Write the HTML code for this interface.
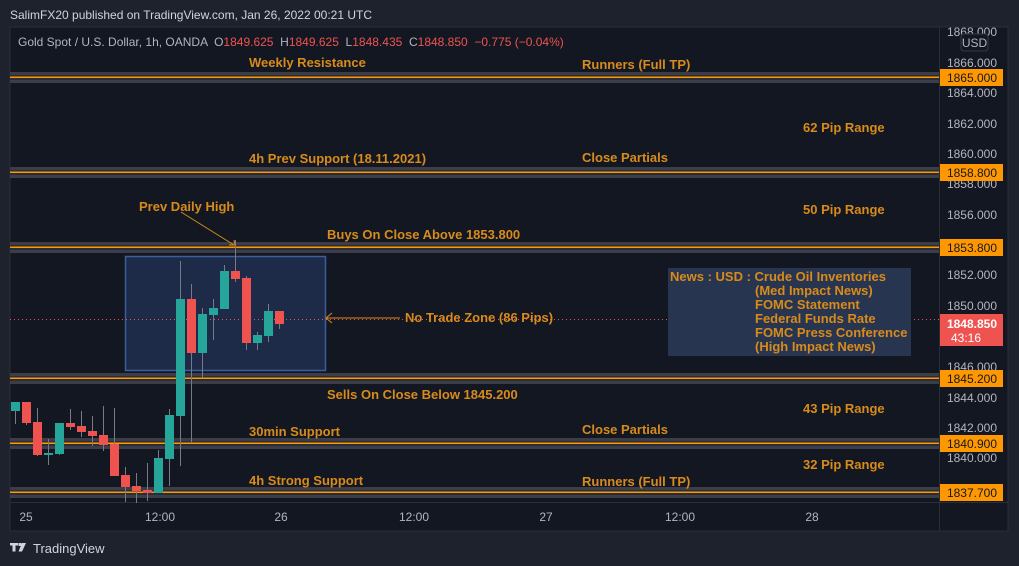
<!DOCTYPE html>
<html><head><meta charset="utf-8"><style>
html,body{margin:0;padding:0;background:#1e222d;width:1019px;height:566px;overflow:hidden}
svg{display:block}
.lb{font-family:"Liberation Sans",sans-serif;font-weight:bold;font-size:13px;fill:#d88b1a}
.ax{font-family:"Liberation Sans",sans-serif;font-size:12px;fill:#b2b5be}
</style></head><body>
<svg width="1019" height="566" viewBox="0 0 1019 566">
<rect x="0" y="0" width="1019" height="566" fill="#1e222d"/>
<text x="10" y="19" font-family="Liberation Sans,sans-serif" font-size="12" fill="#d1d4dc">SalimFX20 published on TradingView.com, Jan 26, 2022 00:21 UTC</text>
<rect x="10" y="27" width="998" height="504" fill="#131722" stroke="#2a2e39"/>
<line x1="939.5" y1="27" x2="939.5" y2="531" stroke="#2a2e39"/>
<line x1="10" y1="502.5" x2="1008" y2="502.5" stroke="#2a2e39"/>
<text x="18" y="46" font-family="Liberation Sans,sans-serif" font-size="12" fill="#b2b5be" xml:space="preserve">Gold Spot / U.S. Dollar, 1h, OANDA  O<tspan fill="#ef5350">1849.625</tspan>  H<tspan fill="#ef5350">1849.625</tspan>  L<tspan fill="#ef5350">1848.435</tspan>  C<tspan fill="#ef5350">1848.850</tspan>  <tspan fill="#ef5350">−0.775 (−0.04%)</tspan></text>
<g>
<rect x="10" y="72" width="929" height="11" fill="#3b3e48"/><rect x="10" y="75" width="929" height="5" fill="#2a2d36"/><rect x="10" y="76.5" width="929" height="1.5" fill="#ff9800"/>
<rect x="10" y="167" width="929" height="11" fill="#3b3e48"/><rect x="10" y="170" width="929" height="5" fill="#2a2d36"/><rect x="10" y="171.5" width="929" height="1.5" fill="#ff9800"/>
<rect x="10" y="242" width="929" height="11" fill="#3b3e48"/><rect x="10" y="245" width="929" height="5" fill="#2a2d36"/><rect x="10" y="246.5" width="929" height="1.5" fill="#ff9800"/>
<rect x="10" y="373" width="929" height="11" fill="#3b3e48"/><rect x="10" y="376" width="929" height="5" fill="#2a2d36"/><rect x="10" y="377.5" width="929" height="1.5" fill="#ff9800"/>
<rect x="10" y="438" width="929" height="11" fill="#3b3e48"/><rect x="10" y="441" width="929" height="5" fill="#2a2d36"/><rect x="10" y="442.5" width="929" height="1.5" fill="#ff9800"/>
<rect x="10" y="487" width="929" height="11" fill="#3b3e48"/><rect x="10" y="490" width="929" height="5" fill="#2a2d36"/><rect x="10" y="491.5" width="929" height="1.5" fill="#ff9800"/>
</g>
<rect x="125.5" y="256.5" width="200" height="114" fill="#1e2b48" stroke="#3b5e9c" stroke-width="1.5"/>
<line x1="10" y1="319.5" x2="939" y2="319.5" stroke="#ef5350" stroke-dasharray="1,3"/>
<rect x="668" y="268" width="243" height="88" fill="#283550"/>
<g stroke="#787b86" stroke-width="1">
<line x1="15.5" y1="402" x2="15.5" y2="424"/><line x1="26.5" y1="402" x2="26.5" y2="425"/><line x1="37.5" y1="408" x2="37.5" y2="456"/><line x1="48.5" y1="439" x2="48.5" y2="465"/><line x1="59.5" y1="423" x2="59.5" y2="455"/><line x1="70.5" y1="409" x2="70.5" y2="430"/><line x1="81.5" y1="411" x2="81.5" y2="437"/><line x1="92.5" y1="416" x2="92.5" y2="446"/><line x1="103.5" y1="406" x2="103.5" y2="451"/><line x1="114.5" y1="408" x2="114.5" y2="476"/><line x1="125.5" y1="467" x2="125.5" y2="502"/><line x1="136.5" y1="473" x2="136.5" y2="503"/><line x1="147.5" y1="463" x2="147.5" y2="501"/><line x1="158.5" y1="450" x2="158.5" y2="493"/><line x1="169.5" y1="409" x2="169.5" y2="486"/><line x1="180.5" y1="261" x2="180.5" y2="466"/><line x1="191.5" y1="284" x2="191.5" y2="442"/><line x1="202.5" y1="308" x2="202.5" y2="378"/><line x1="213.5" y1="299" x2="213.5" y2="340"/><line x1="224.5" y1="265" x2="224.5" y2="309"/><line x1="235.5" y1="240" x2="235.5" y2="282"/><line x1="246.5" y1="276" x2="246.5" y2="350"/><line x1="257.5" y1="332" x2="257.5" y2="350"/><line x1="268.5" y1="304" x2="268.5" y2="342"/><line x1="279.5" y1="311" x2="279.5" y2="329"/>
</g>
<g>
<rect x="11" y="402" width="9" height="9" fill="#26a69a"/><rect x="22" y="402" width="9" height="21" fill="#ef5350"/><rect x="33" y="422" width="9" height="33" fill="#ef5350"/><rect x="44" y="453" width="9" height="2" fill="#26a69a"/><rect x="55" y="423" width="9" height="31" fill="#26a69a"/><rect x="66" y="423" width="9" height="4" fill="#ef5350"/><rect x="77" y="426" width="9" height="6" fill="#ef5350"/><rect x="88" y="431" width="9" height="5" fill="#ef5350"/><rect x="99" y="435" width="9" height="10" fill="#ef5350"/><rect x="110" y="444" width="9" height="32" fill="#ef5350"/><rect x="121" y="475" width="9" height="12" fill="#ef5350"/><rect x="132" y="486" width="9" height="5" fill="#ef5350"/><rect x="143" y="490" width="9" height="3" fill="#ef5350"/><rect x="154" y="458" width="9" height="35" fill="#26a69a"/><rect x="165" y="415" width="9" height="44" fill="#26a69a"/><rect x="176" y="299" width="9" height="117" fill="#26a69a"/><rect x="187" y="299" width="9" height="54" fill="#ef5350"/><rect x="198" y="314" width="9" height="39" fill="#26a69a"/><rect x="209" y="308" width="9" height="7" fill="#26a69a"/><rect x="220" y="271" width="9" height="38" fill="#26a69a"/><rect x="231" y="271" width="9" height="8" fill="#ef5350"/><rect x="242" y="278" width="9" height="65" fill="#ef5350"/><rect x="253" y="335" width="9" height="8" fill="#26a69a"/><rect x="264" y="311" width="9" height="25" fill="#26a69a"/><rect x="275" y="311" width="9" height="13" fill="#ef5350"/>
</g>
<line x1="181" y1="212" x2="234" y2="245" stroke="#d88b1a" stroke-width="1"/>
<path d="M229 245 L235 245 L234 240" fill="none" stroke="#d88b1a"/>
<line x1="327" y1="318" x2="400" y2="318" stroke="#d88b1a"/>
<path d="M332 313 L326 318 L332 323" fill="none" stroke="#d88b1a"/>
<text class="lb" x="249" y="67">Weekly Resistance</text>
<text class="lb" x="582" y="69">Runners (Full TP)</text>
<text class="lb" x="803" y="132">62 Pip Range</text>
<text class="lb" x="249" y="163">4h Prev Support (18.11.2021)</text>
<text class="lb" x="582" y="162">Close Partials</text>
<text class="lb" x="139" y="211">Prev Daily High</text>
<text class="lb" x="803" y="214">50 Pip Range</text>
<text class="lb" x="327" y="239">Buys On Close Above 1853.800</text>
<text class="lb" x="405" y="322">No Trade Zone (86 Pips)</text>
<text class="lb" x="327" y="399">Sells On Close Below 1845.200</text>
<text class="lb" x="803" y="413">43 Pip Range</text>
<text class="lb" x="249" y="436">30min Support</text>
<text class="lb" x="582" y="434">Close Partials</text>
<text class="lb" x="803" y="469">32 Pip Range</text>
<text class="lb" x="249" y="485">4h Strong Support</text>
<text class="lb" x="582" y="486">Runners (Full TP)</text>
<text class="lb" x="670" y="281">News : USD : Crude Oil Inventories</text>
<text class="lb" x="755" y="295">(Med Impact News)</text>
<text class="lb" x="755" y="309">FOMC Statement</text>
<text class="lb" x="755" y="323">Federal Funds Rate</text>
<text class="lb" x="755" y="337">FOMC Press Conference</text>
<text class="lb" x="755" y="351">(High Impact News)</text>
<g class="ax" text-anchor="end">
<text x="997" y="36">1868.000</text><text x="997" y="67">1866.000</text><text x="997" y="97">1864.000</text><text x="997" y="128">1862.000</text><text x="997" y="158">1860.000</text><text x="997" y="188">1858.000</text><text x="997" y="219">1856.000</text><text x="997" y="279">1852.000</text><text x="997" y="310">1850.000</text><text x="997" y="371">1846.000</text><text x="997" y="402">1844.000</text><text x="997" y="432">1842.000</text><text x="997" y="462">1840.000</text><text x="997" y="493">1838.000</text>
</g>
<rect x="961" y="34" width="27" height="17" rx="3" fill="#131722" stroke="#363a45"/>
<text x="974.5" y="47" class="ax" text-anchor="middle">USD</text>
<g font-family="Liberation Sans,sans-serif" font-size="12" fill="#131722" text-anchor="end">
<rect x="940" y="69" width="63" height="17" fill="#ff9800"/><text x="997" y="82">1865.000</text>
<rect x="940" y="164" width="63" height="17" fill="#ff9800"/><text x="997" y="177">1858.800</text>
<rect x="940" y="239" width="63" height="17" fill="#ff9800"/><text x="997" y="252">1853.800</text>
<rect x="940" y="370" width="63" height="17" fill="#ff9800"/><text x="997" y="383">1845.200</text>
<rect x="940" y="435" width="63" height="17" fill="#ff9800"/><text x="997" y="448">1840.900</text>
<rect x="940" y="484" width="63" height="17" fill="#ff9800"/><text x="997" y="497">1837.700</text>
</g>
<rect x="940" y="314" width="63" height="32" fill="#ef5350"/>
<text x="997" y="328" font-family="Liberation Sans,sans-serif" font-size="12" font-weight="bold" fill="#fff" text-anchor="end">1848.850</text>
<text x="951" y="342" font-family="Liberation Sans,sans-serif" font-size="12" fill="#fff">43:16</text>
<g class="ax" text-anchor="middle">
<text x="26" y="521">25</text><text x="160" y="521">12:00</text><text x="281" y="521">26</text><text x="414" y="521">12:00</text><text x="546" y="521">27</text><text x="680" y="521">12:00</text><text x="812" y="521">28</text>
</g>
<path d="M10 543 h8 v2.5 h-2.5 v6 h-3 v-6 h-2.5z M18.5 543 h3 v3 h-3z M22 543 h4 l-4 8.5 h-3.5z" fill="#d1d4dc"/>
<text x="33" y="553" font-family="Liberation Sans,sans-serif" font-size="13" fill="#d1d4dc">TradingView</text>
</svg>
</body></html>
